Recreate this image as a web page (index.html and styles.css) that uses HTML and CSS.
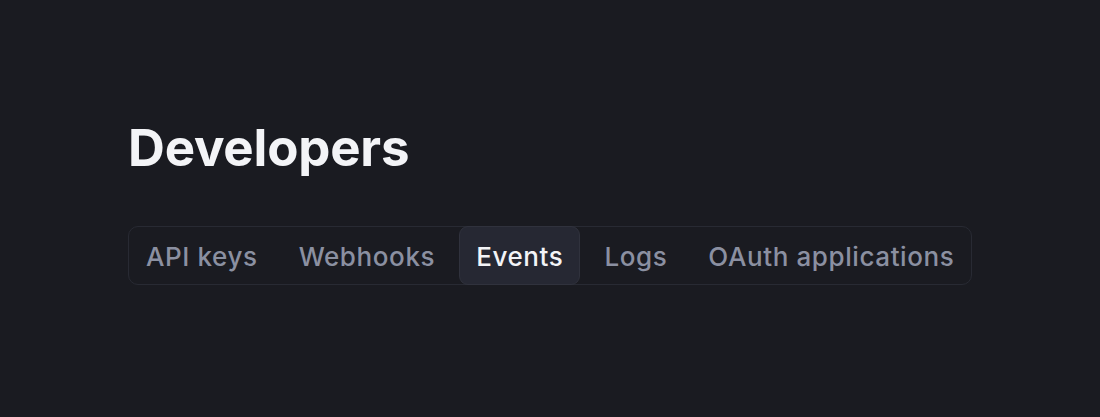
FILE: index.html
```html
<!DOCTYPE html>
<html lang="en">
<head>
<meta charset="utf-8">
<title>Developers</title>
<link rel="stylesheet" href="styles.css">
</head>
<body>
<main class="page">
  <h1 class="title">Developers</h1>
  <nav class="tabs">
    <a class="tab">API keys</a>
    <a class="tab">Webhooks</a>
    <a class="tab active">Events</a>
    <a class="tab">Logs</a>
    <a class="tab">OAuth applications</a>
  </nav>
</main>
</body>
</html>
```

FILE: styles.css
```css
html, body {
  margin: 0;
  padding: 0;
  background: #1a1b21;
  height: 100%;
}
body {
  font-family: Inter, "Noto Sans", sans-serif;
  -webkit-font-smoothing: antialiased;
}
.page {
  padding: 112px 128px 0;
  display: flex;
  flex-direction: column;
  align-items: flex-start;
}
.title {
  margin: 0;
  font-size: 51px;
  font-weight: 700;
  line-height: 72px;
  color: #f3f4f7;
  letter-spacing: -0.2px;
}
.tabs {
  margin-top: 42px;
  display: flex;
  gap: 7px;
  padding: 0;
  height: 57px;
  border: 1px solid #282a33;
  border-radius: 10px;
  white-space: nowrap;
}
.tab {
  display: block;
  flex-shrink: 0;
  margin: -1px 0;
  padding: 0 16px;
  height: 59px;
  line-height: 60px;
  font-size: 26px;
  font-weight: 500;
  letter-spacing: 0.6px;
  color: #8b90a1;
  border-radius: 9px;
  border: 1px solid transparent;
  box-sizing: border-box;
}
.tab.active {
  background: #262833;
  border-color: #30323d;
  color: #f3f4f7;
}
```
